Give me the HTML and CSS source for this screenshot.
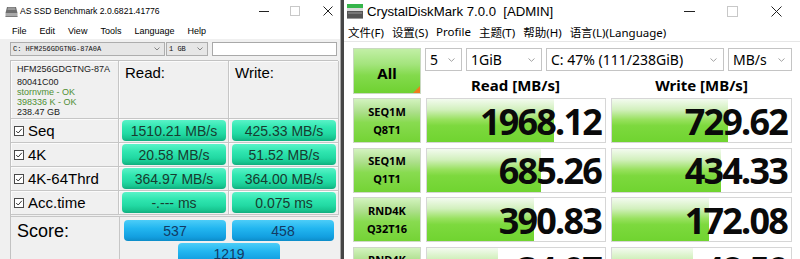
FILE: index.html
```html
<!DOCTYPE html>
<html lang="en">
<head>
<meta charset="utf-8">
<title>Benchmarks</title>
<link rel="stylesheet" href="styles.css">
</head>
<body>
<div class="screen">
  <section class="asssd">
    <header class="titlebar">
      <svg class="app-icon" width="13" height="11" viewBox="0 0 13 11">
        <path d="M2 1 H11 L12.5 7 H0.5 Z" fill="#6e6e6e"/>
        <path d="M3 1.5 H10 L10.6 4 H2.4 Z" fill="#9a9a9a"/>
        <rect x="0.5" y="7" width="12" height="3.5" fill="#a9a9a9"/>
        <rect x="0.5" y="10" width="12" height="1" fill="#7a7a7a"/>
      </svg>
      <span class="title">AS SSD Benchmark 2.0.6821.41776</span>
      <div class="controls">
        <svg class="ctl ctl-min" width="10" height="10" viewBox="0 0 10 10"><path d="M0 5.5 H10" stroke="#222" stroke-width="1"/></svg>
        <svg class="ctl ctl-max" width="10" height="10" viewBox="0 0 10 10"><rect x="0.5" y="0.5" width="9" height="9" fill="none" stroke="#c8c8c8" stroke-width="1"/></svg>
        <svg class="ctl ctl-close" width="10" height="10" viewBox="0 0 10 10"><path d="M0.5 0.5 L9.5 9.5 M9.5 0.5 L0.5 9.5" stroke="#222" stroke-width="1"/></svg>
      </div>
    </header>
    <nav class="menu">
      <span>File</span><span>Edit</span><span>View</span><span>Tools</span><span>Language</span><span>Help</span>
    </nav>
    <div class="toolbar">
      <div class="combo drive"><span class="combo-text">C: HFM256GDGTNG-87A0A</span><svg class="chev" width="6" height="4" viewBox="0 0 6 4"><path d="M0.5 0.5 L3 3 L5.5 0.5" fill="none" stroke="#777" stroke-width="0.9"/></svg></div>
      <div class="combo size"><span class="combo-text">1 GB</span><svg class="chev" width="6" height="4" viewBox="0 0 6 4"><path d="M0.5 0.5 L3 3 L5.5 0.5" fill="none" stroke="#777" stroke-width="0.9"/></svg></div>
      <div class="textbox"></div>
    </div>
    <div class="results">
      <div class="rrow head">
        <div class="cell info">
          <div class="model">HFM256GDGTNG-87A</div>
          <div>80041C00</div>
          <div class="ok">stornvme - OK</div>
          <div class="ok">398336 K - OK</div>
          <div>238.47 GB</div>
        </div>
        <div class="cell hcell">Read:</div>
        <div class="cell hcell">Write:</div>
      </div>
      <div class="rrow data">
        <div class="cell label"><svg class="chk" width="10" height="10" viewBox="0 0 10 10"><rect x="0.5" y="0.5" width="9" height="9" fill="#fff" stroke="#4a4a4a"/><path d="M2.2 5 L4.2 7 L7.8 2.8" fill="none" stroke="#333" stroke-width="1"/></svg>Seq</div>
        <div class="cell barcell read"><div class="bar">1510.21 MB/s</div></div>
        <div class="cell barcell write"><div class="bar">425.33 MB/s</div></div>
      </div>
      <div class="rrow data">
        <div class="cell label"><svg class="chk" width="10" height="10" viewBox="0 0 10 10"><rect x="0.5" y="0.5" width="9" height="9" fill="#fff" stroke="#4a4a4a"/><path d="M2.2 5 L4.2 7 L7.8 2.8" fill="none" stroke="#333" stroke-width="1"/></svg>4K</div>
        <div class="cell barcell read"><div class="bar">20.58 MB/s</div></div>
        <div class="cell barcell write"><div class="bar">51.52 MB/s</div></div>
      </div>
      <div class="rrow data">
        <div class="cell label"><svg class="chk" width="10" height="10" viewBox="0 0 10 10"><rect x="0.5" y="0.5" width="9" height="9" fill="#fff" stroke="#4a4a4a"/><path d="M2.2 5 L4.2 7 L7.8 2.8" fill="none" stroke="#333" stroke-width="1"/></svg>4K-64Thrd</div>
        <div class="cell barcell read"><div class="bar">364.97 MB/s</div></div>
        <div class="cell barcell write"><div class="bar">364.00 MB/s</div></div>
      </div>
      <div class="rrow data">
        <div class="cell label"><svg class="chk" width="10" height="10" viewBox="0 0 10 10"><rect x="0.5" y="0.5" width="9" height="9" fill="#fff" stroke="#4a4a4a"/><path d="M2.2 5 L4.2 7 L7.8 2.8" fill="none" stroke="#333" stroke-width="1"/></svg>Acc.time</div>
        <div class="cell barcell read"><div class="bar">-.--- ms</div></div>
        <div class="cell barcell write"><div class="bar">0.075 ms</div></div>
      </div>
      <div class="score">
        <div class="score-label">Score:</div>
        <div class="score-vals">
          <div class="sbar">537</div>
          <div class="sbar">458</div>
          <div class="sbar total">1219</div>
        </div>
      </div>
    </div>
  </section>
  <div class="divider"></div>
  <section class="cdm">
    <header class="titlebar">
      <svg class="app-icon" width="16" height="15" viewBox="0 0 16 15">
        <rect x="0" y="0" width="16" height="4" fill="#35b54a"/>
        <rect x="0" y="4" width="16" height="3" fill="#d9d9d9"/>
        <rect x="0" y="7" width="16" height="7" fill="#555"/>
        <rect x="1" y="8" width="14" height="2" fill="#777"/>
        <rect x="0" y="14" width="16" height="1" fill="#999"/>
      </svg>
      <span class="title">CrystalDiskMark 7.0.0&nbsp; [ADMIN]</span>
      <div class="controls">
        <svg class="ctl ctl-min" width="11" height="11" viewBox="0 0 11 11"><path d="M0 5.5 H11" stroke="#222" stroke-width="1"/></svg>
        <svg class="ctl ctl-max" width="11" height="11" viewBox="0 0 11 11"><rect x="0.5" y="0.5" width="10" height="10" fill="none" stroke="#c8c8c8" stroke-width="1"/></svg>
        <svg class="ctl ctl-close" width="11" height="11" viewBox="0 0 11 11"><path d="M0.5 0.5 L10.5 10.5 M10.5 0.5 L0.5 10.5" stroke="#222" stroke-width="1"/></svg>
      </div>
    </header>
    <nav class="menu">
      <span>文件(F)</span><span>设置(S)</span><span>Profile</span><span>主题(T)</span><span>帮助(H)</span><span>语言(L)(Language)</span>
    </nav>
    <div class="cdm-body">
      <div class="cdm-top">
        <div class="all-btn">All<span class="corner"></span></div>
        <div class="top-right">
          <div class="selects">
            <div class="sel s-count"><span>5</span><svg class="chev" width="7" height="4" viewBox="0 0 7 4"><path d="M0.5 0.5 L3.5 3.3 L6.5 0.5" fill="none" stroke="#999" stroke-width="0.9"/></svg></div>
            <div class="sel s-size"><span>1GiB</span><svg class="chev" width="7" height="4" viewBox="0 0 7 4"><path d="M0.5 0.5 L3.5 3.3 L6.5 0.5" fill="none" stroke="#999" stroke-width="0.9"/></svg></div>
            <div class="sel s-drive"><span>C: 47% (111/238GiB)</span><svg class="chev" width="7" height="4" viewBox="0 0 7 4"><path d="M0.5 0.5 L3.5 3.3 L6.5 0.5" fill="none" stroke="#999" stroke-width="0.9"/></svg></div>
            <div class="sel s-unit"><span>MB/s</span><svg class="chev" width="7" height="4" viewBox="0 0 7 4"><path d="M0.5 0.5 L3.5 3.3 L6.5 0.5" fill="none" stroke="#999" stroke-width="0.9"/></svg></div>
          </div>
          <div class="heads">
            <div>Read [MB/s]</div>
            <div>Write [MB/s]</div>
          </div>
        </div>
      </div>
      <div class="cdm-row">
        <div class="tlabel">SEQ1M<br>Q8T1</div>
        <div class="tval" style="--w:127px">1968.12</div>
        <div class="tval" style="--w:116px">729.62</div>
      </div>
      <div class="cdm-row">
        <div class="tlabel">SEQ1M<br>Q1T1</div>
        <div class="tval" style="--w:114px">685.26</div>
        <div class="tval" style="--w:109px">434.33</div>
      </div>
      <div class="cdm-row">
        <div class="tlabel">RND4K<br>Q32T16</div>
        <div class="tval" style="--w:107px">390.83</div>
        <div class="tval" style="--w:97px">172.08</div>
      </div>
      <div class="cdm-row">
        <div class="tlabel">RND4K<br>Q1T1</div>
        <div class="tval" style="--w:71px">34.07</div>
        <div class="tval" style="--w:81px">48.50</div>
      </div>
    </div>
  </section>
</div>
</body>
</html>
```

FILE: styles.css
```css
* { box-sizing: border-box; margin: 0; padding: 0; }
html, body { width: 800px; height: 259px; overflow: hidden; }
body { margin: 0; background: #fff; font-family: "Liberation Sans", Arial, sans-serif; color: #000; }

.screen { display: flex; width: 800px; height: 259px; overflow: hidden; }
.asssd { width: 341px; flex: none; background: #f0f0f0; border-right: 1px solid #a6a6a6; display: flex; flex-direction: column; }
.divider { width: 3px; flex: none; background: #464646; }
.cdm { width: 456px; flex: none; background: #fff; display: flex; flex-direction: column; }

/* ---------- title bars ---------- */
.titlebar { background: #fff; display: flex; align-items: center; flex: none; }
.app-icon { flex: none; display: block; }
.controls { margin-left: auto; display: flex; align-items: center; }
.ctl { display: block; flex: none; }

.asssd .titlebar { height: 22px; padding-left: 5px; }
.asssd .title { font-size: 8.6px; margin-left: 2px; }
.asssd .controls { padding-right: 7px; }
.asssd .ctl-max { margin-left: 21px; }
.asssd .ctl-close { margin-left: 23px; }

.cdm .titlebar { height: 22px; padding-left: 3px; }
.cdm .title { font-size: 13.2px; margin-left: 4px; }
.cdm .controls { padding-right: 18px; }
.cdm .ctl-max { margin-left: 32px; }
.cdm .ctl-close { margin-left: 33px; }

/* ---------- menus ---------- */
.menu { display: flex; align-items: center; flex: none; background: #fff; }
.asssd .menu { height: 17px; padding-left: 12px; gap: 13px; font-size: 9px; }
.cdm .menu { height: 20px; padding-left: 4px; gap: 8px; font-family: "Noto Sans", "Noto Sans CJK SC", sans-serif; font-size: 11.5px; border-bottom: 1px solid #e6e6e6; }

/* ---------- AS SSD toolbar ---------- */
.toolbar { display: flex; align-items: center; height: 18px; padding: 1px 0 0 10px; flex: none; }
.combo { height: 14px; border: 1px solid #adadad; background: #e6e6e6; display: flex; align-items: center; padding: 0 4px 0 2px; }
.combo-text { font-family: "Liberation Mono", monospace; font-size: 7px; white-space: nowrap; color: #111; }
.combo .chev { margin-left: auto; display: block; }
.combo.drive { width: 155px; }
.combo.size { width: 42px; margin-left: 1px; }
.textbox { width: 125px; height: 14px; margin-left: 4px; background: #fff; border: 1px solid #a9a9a9; }

/* ---------- AS SSD results ---------- */
.results { margin: 3px 0 0 10px; width: 328px; flex: 1; display: flex; flex-direction: column; border-left: 1px solid #c2c2c2; border-top: 1px solid #c2c2c2; }
.rrow { display: grid; grid-template-columns: 108px 110px 110px; flex: none; }
.rrow.head { height: 58px; }
.rrow.data { height: 24px; }
.cell { border-right: 1px solid #c6c6c6; border-bottom: 1px solid #c6c6c6; box-shadow: inset 1px 1px 0 #fbfbfb; }
.info { padding: 3px 0 0 6px; font-size: 9px; line-height: 10px; color: #1a1a1a; }
.info .model { margin-bottom: 3px; }
.info .ok { color: #4f8f34; }
.hcell { font-size: 15px; padding: 3px 0 0 6px; line-height: 17px; }
.label { display: flex; align-items: center; font-size: 15px; padding-left: 3px; }
.chk { display: block; margin-right: 4px; flex: none; }
.barcell { padding: 1px 2px 1px 3px; }
.barcell.read { padding-left: 3px; padding-right: 2px; }
.bar { height: 100%; border-radius: 4px; display: flex; align-items: center; justify-content: center; font-size: 14px; color: #183c30;
  background: linear-gradient(to bottom, #5af3c8 0%, #30e6b0 35%, #22d9a3 65%, #18c791 85%, #10ad7e 100%); }

.score { flex: 1; display: flex; border-top: 1px solid #c6c6c6; margin-top: 1px; }
.score-label { width: 109px; flex: none; border-right: 1px solid #c6c6c6; font-size: 18px; padding: 4px 0 0 6px; line-height: 20px; }
.score-vals { display: grid; grid-template-columns: 102px 102px; column-gap: 6px; row-gap: 2px; padding: 3px 0 0 4px; align-content: start; }
.sbar { height: 21px; border-radius: 4px; display: flex; align-items: center; justify-content: center; font-size: 14px; color: #133a63;
  background: linear-gradient(to bottom, #4ccdf8 0%, #22b6f0 40%, #139fe0 80%, #0d8cc8 100%); }
.sbar.total { grid-column: 1 / 3; justify-self: center; width: 102px; }

/* ---------- CrystalDiskMark body ---------- */
.cdm-body { padding: 6px 8px 0 9px; display: flex; flex-direction: column; font-family: "Noto Sans", sans-serif; }
.cdm-top { display: flex; gap: 4px; height: 50px; flex: none; }
.all-btn { width: 68px; height: 46px; flex: none; position: relative; border: 1px solid #c9d9c0; display: flex; align-items: center; justify-content: center; padding-top: 4px;
  font-weight: 700; font-size: 15px;
  background: linear-gradient(to bottom, #c2efa6 0%, #a3e47c 35%, #83da4c 60%, #6fd131 100%); }
.corner { position: absolute; right: 0; bottom: 0; width: 0; height: 0; border-left: 7px solid transparent; border-bottom: 7px solid #f07c1c; }
.top-right { display: flex; flex-direction: column; width: 367px; }
.selects { display: flex; gap: 4px; height: 23px; flex: none; }
.sel { height: 23px; border: 1px solid #c4c4c4; background: #fff; display: flex; align-items: center; padding: 0 6px 0 4px; font-size: 14px; white-space: nowrap; }
.sel .chev { margin-left: auto; display: block; flex: none; }
.s-count { width: 37px; }
.s-size { width: 76px; }
.s-drive { width: 178px; }
.s-unit { width: 64px; }
.heads { display: grid; grid-template-columns: 181px 181px; column-gap: 5px; flex: 1; align-items: center; font-weight: 700; font-size: 15px; text-align: center; padding-top: 1px; }

.cdm-row { display: grid; grid-template-columns: 68px 180px 181px; column-gap: 5px; height: 45px; flex: none; }
.cdm-row + .cdm-row { margin-top: 4.5px; }
.tlabel { border: 1px solid #cfd8c8; display: flex; align-items: center; justify-content: center; text-align: center; font-weight: 700; font-size: 11px; line-height: 18px;
  background: linear-gradient(to bottom, #d3f3bf 0%, #addf8c 30%, #88db50 55%, #74d335 100%); }
.tval { border: 1px solid #d6d6d6; display: flex; align-items: center; justify-content: flex-end; padding: 2px 4px 0 0; font-weight: 700; font-size: 36px; letter-spacing: -1.8px; line-height: 1; color: #0a0a0a;
  background-color: #fff;
  background-image: linear-gradient(to bottom, #f3fbef 0%, #d2f0bd 25%, #98e15e 48%, #7dd93e 62%, #70d430 100%);
  background-repeat: no-repeat; background-size: var(--w) 100%; }
```
